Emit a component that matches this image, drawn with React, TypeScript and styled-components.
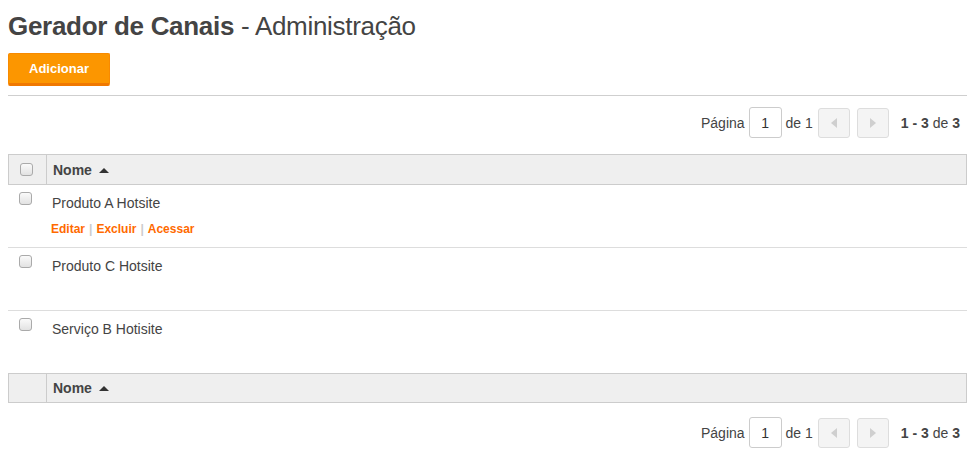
import styled, { createGlobalStyle } from "styled-components";

const GlobalStyle = createGlobalStyle`
  body {
    margin: 8px;
    font-family: "Liberation Sans", Arial, sans-serif;
    color: #444;
    background: #fff;
  }
`;

const Title = styled.h1`
  margin: 0;
  padding-top: 2px;
  font-size: 26px;
  line-height: 32px;
  font-weight: normal;
  color: #444;
  letter-spacing: -0.3px;

  strong {
    font-weight: bold;
  }
`;

const AddButton = styled.button`
  margin-top: 11px;
  width: 102px;
  height: 33px;
  background: #fc9600;
  border: 1px solid #f88a00;
  border-bottom: 3px solid #f07800;
  border-radius: 2px;
  color: #fff;
  font-family: inherit;
  font-weight: bold;
  font-size: 13px;
  cursor: pointer;
  padding: 0;
`;

const Divider = styled.hr`
  margin: 9px 0 0;
  border: 0;
  border-top: 1px solid #cfcfcf;
`;

const Pager = styled.div<{ $top: number }>`
  display: flex;
  justify-content: flex-end;
  align-items: center;
  gap: 4px;
  margin-top: ${(p) => p.$top}px;
  padding-right: 7px;
  font-size: 14px;
  color: #444;
  height: 31px;
`;

const PageInput = styled.input`
  width: 33px;
  height: 31px;
  box-sizing: border-box;
  border: 1px solid #ccc;
  border-radius: 3px;
  text-align: center;
  font-family: inherit;
  font-size: 14px;
  color: #333;
  padding: 0;
`;

const PageButton = styled.button<{ $space: number }>`
  width: 32px;
  height: 30px;
  box-sizing: border-box;
  border: 1px solid #ddd;
  border-radius: 3px;
  background: #f4f4f4;
  display: flex;
  align-items: center;
  justify-content: center;
  padding: 0;
  margin-left: ${(p) => p.$space}px;
`;

const Count = styled.span`
  margin-left: 8px;

  b {
    font-weight: bold;
  }
`;

const Table = styled.table`
  width: 100%;
  border-collapse: separate;
  border-spacing: 0;
  font-size: 14px;
  margin-top: 16px;
`;

const HeadCell = styled.th<{ $narrow?: boolean; $h: number }>`
  box-sizing: border-box;
  background: #efefef;
  border-top: 1px solid #ccc;
  border-bottom: 1px solid #ccc;
  border-right: 1px solid #ccc;
  border-left: ${(p) => (p.$narrow ? "1px solid #ccc" : "0")};
  height: ${(p) => p.$h}px;
  padding: 0 ${(p) => (p.$narrow ? "0" : "6px")};
  width: ${(p) => (p.$narrow ? "39px" : "auto")};
  text-align: left;
  font-weight: bold;
  color: #444;
`;

const SortLabel = styled.span`
  display: inline-flex;
  align-items: center;
  gap: 7px;
`;

const Caret = styled.span`
  width: 0;
  height: 0;
  border-left: 5px solid transparent;
  border-right: 5px solid transparent;
  border-bottom: 5px solid #333;
  margin-top: 1px;
`;

const Row = styled.tr`
  & > td {
    border-bottom: 1px solid #ddd;
    height: 63px;
  }

  &:last-child > td {
    border-bottom: 0;
    height: 62px;
  }
`;

const Cell = styled.td<{ $narrow?: boolean }>`
  vertical-align: top;
  padding: ${(p) => (p.$narrow ? "7px 0 0" : "10px 5px 0")};
  box-sizing: border-box;
`;

const Check = styled.span`
  display: block;
  width: 13px;
  height: 13px;
  margin-left: 11px;
  box-sizing: border-box;
  border: 1px solid #aaa;
  border-radius: 3px;
  background: linear-gradient(#fafafa, #e2e2e2);
`;

const Name = styled.div`
  color: #444;
  line-height: 16px;
`;

const Actions = styled.div`
  margin-top: 11px;
  font-size: 12px;
  line-height: 14px;
  font-weight: bold;
  color: #ccc;
  display: flex;
  gap: 4px;
  margin-left: -1px;

  a {
    color: #ff6a00;
    text-decoration: none;
  }
`;

const Tri = ({ dir }: { dir: "left" | "right" }) => (
  <svg width="6" height="10" viewBox="0 0 6 10">
    <path
      d={dir === "left" ? "M6 0 L0 5 L6 10 Z" : "M0 0 L6 5 L0 10 Z"}
      fill="#cfcfcf"
    />
  </svg>
);

const Pagination = ({ top }: { top: number }) => (
  <Pager $top={top}>
    <span>Página</span>
    <PageInput defaultValue="1" />
    <span>de 1</span>
    <PageButton $space={1}>
      <Tri dir="left" />
    </PageButton>
    <PageButton $space={3}>
      <Tri dir="right" />
    </PageButton>
    <Count>
      <b>1 - 3</b> de <b>3</b>
    </Count>
  </Pager>
);

const rows = [
  { name: "Produto A Hotsite", actions: true },
  { name: "Produto C Hotsite", actions: false },
  { name: "Serviço B Hotisite", actions: false },
];

export default function App() {
  return (
    <>
      <GlobalStyle />
      <Title>
        <strong>Gerador de Canais</strong> - Administração
      </Title>
      <AddButton>Adicionar</AddButton>
      <Divider />
      <Pagination top={11} />
      <Table>
        <thead>
          <tr>
            <HeadCell $narrow $h={31}>
              <Check />
            </HeadCell>
            <HeadCell $h={31}>
              <SortLabel>
                Nome <Caret />
              </SortLabel>
            </HeadCell>
          </tr>
        </thead>
        <tbody>
          {rows.map((r) => (
            <Row key={r.name}>
              <Cell $narrow>
                <Check />
              </Cell>
              <Cell>
                <Name>{r.name}</Name>
                {r.actions && (
                  <Actions>
                    <a href="#">Editar</a>|<a href="#">Excluir</a>|
                    <a href="#">Acessar</a>
                  </Actions>
                )}
              </Cell>
            </Row>
          ))}
        </tbody>
        <tfoot>
          <tr>
            <HeadCell $narrow $h={30} />
            <HeadCell $h={30}>
              <SortLabel>
                Nome <Caret />
              </SortLabel>
            </HeadCell>
          </tr>
        </tfoot>
      </Table>
      <Pagination top={14} />
    </>
  );
}
